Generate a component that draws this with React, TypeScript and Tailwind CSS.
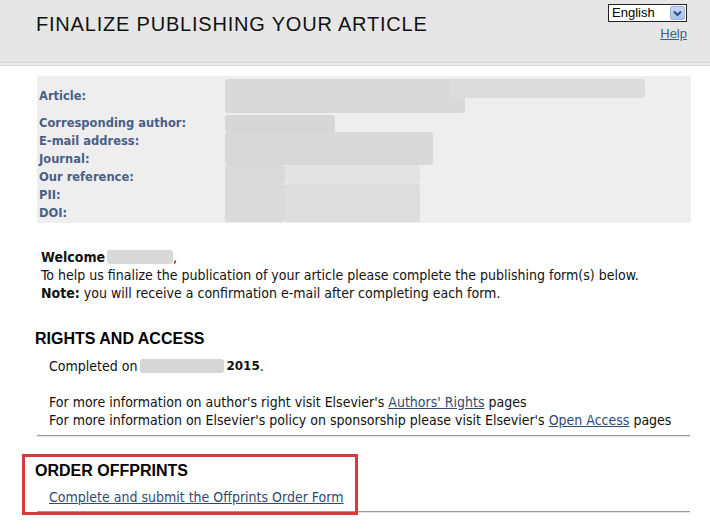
import React from "react";

const labels: { label: string; tall?: boolean }[] = [
  { label: "Article:", tall: true },
  { label: "Corresponding author:" },
  { label: "E-mail address:" },
  { label: "Journal:" },
  { label: "Our reference:" },
  { label: "PII:" },
  { label: "DOI:" },
];

const Blur = ({ className }: { className: string }) => (
  <div className={`rounded-[3px] ${className}`} />
);

export default function App() {
  return (
    <div className="relative w-[710px] h-[531px] overflow-hidden bg-white font-['DejaVu_Sans_Condensed',Tahoma,sans-serif] text-[14px] text-[#111]">
      {/* Header */}
      <div className="flex justify-between bg-[#e6e6e6] h-[62px] font-['Liberation_Sans',Arial,sans-serif]">
        <h1 className="pl-[36px] pt-[12px] text-[20px] tracking-[0.8px] text-[#111] leading-[24px]">
          FINALIZE PUBLISHING YOUR ARTICLE
        </h1>
        <div className="flex flex-col items-end pr-[23px] pt-[4px]">
          <div className="flex items-center w-[79px] h-[18px] border border-[#222] bg-white">
            <span className="flex-1 pl-[3px] text-[13px] leading-[16px] text-black">English</span>
            <span className="flex items-center justify-center w-[15px] h-[14px] mr-[1px] rounded-[2px] bg-gradient-to-b from-[#c9d8f5] to-[#a9c0ee] border border-[#9fb4dc]">
              <svg width="9" height="7" viewBox="0 0 9 7">
                <path d="M1 1.5 L4.5 5 L8 1.5" stroke="#2b4a8a" strokeWidth="2" fill="none" />
              </svg>
            </span>
          </div>
          <a className="mt-[4px] text-[13px] leading-[15px] text-[#3d5d8d] underline">Help</a>
        </div>
      </div>
      <div className="h-[1px] bg-[#d2d2d2]" />
      <div className="h-[2px] bg-[#ececec]" />
      <div className="h-[1px] bg-[#d6d6d6]" />

      {/* Info table */}
      <div className="ml-[37px] mr-[19px] mt-[10px] bg-[#eeeeee] pt-[3px] flex">
        <div className="w-[188px] pl-[2px] font-['DejaVu_Sans',Verdana,sans-serif] font-bold text-[11.5px] text-[#4a5f85]">
          {labels.map((l) => (
            <div
              key={l.label}
              className={`flex items-center ${l.tall ? "h-[36px]" : "h-[18px]"}`}
            >
              {l.label}
            </div>
          ))}
        </div>
        <div className="flex flex-col">
          <div className="flex h-[36px]">
            <Blur className="w-[240px] h-[34px] bg-[#d9d9d9]" />
            <Blur className="w-[195px] h-[19px] -ml-[15px] bg-[#dcdcdc]" />
          </div>
          <Blur className="w-[110px] h-[17px] bg-[#d6d6d6]" />
          <Blur className="w-[208px] h-[33px] bg-[#d8d8d8]" />
          <div className="flex">
            <Blur className="w-[60px] h-[57px] bg-[#dadada]" />
            <div className="flex flex-col">
              <Blur className="w-[135px] h-[19px] bg-[#e4e4e4]" />
              <Blur className="w-[135px] h-[38px] bg-[#dddddd]" />
            </div>
          </div>
        </div>
      </div>

      {/* Welcome */}
      <div className="ml-[41px] mt-[25px] leading-[18px]">
        <div className="flex items-center">
          <b>Welcome</b>
          <Blur className="ml-[2px] w-[66px] h-[14px] bg-[#d9d9d9]" />
          <span>,</span>
        </div>
        <p>
          To help us finalize the publication of your article please complete the publishing form(s) below.
        </p>
        <p>
          <b>Note:</b> you will receive a confirmation e-mail after completing each form.
        </p>
      </div>

      {/* Rights and access */}
      <div className="mt-[27px]">
        <h2 className="pl-[35px] font-['Liberation_Sans',Arial,sans-serif] font-bold text-[16px] leading-[20px] text-black">
          RIGHTS AND ACCESS
        </h2>
        <div className="pl-[49px] mt-[8px] leading-[18px]">
          <div className="flex items-center">
            <span>Completed on</span>
            <Blur className="ml-[3px] w-[84px] h-[14px] bg-[#d6d6d6]" />
            <b className="ml-[2px] font-['DejaVu_Sans',Verdana,sans-serif] text-[12px]">2015</b>
            <span>.</span>
          </div>
          <p className="mt-[18px]">
            For more information on author's right visit Elsevier's{" "}
            <a className="text-[#2f4b72] underline">Authors' Rights</a> pages
          </p>
          <p>
            For more information on Elsevier's policy on sponsorship please visit Elsevier's{" "}
            <a className="text-[#2f4b72] underline">Open Access</a> pages
          </p>
        </div>
        <div className="ml-[37px] mr-[20px] mt-[6px] h-[2px] bg-[#9a9a9a] border-b border-[#e5e5e5]" />
      </div>

      {/* Order offprints */}
      <div className="mt-[24px]">
        <h2 className="pl-[35px] font-['Liberation_Sans',Arial,sans-serif] font-bold text-[16px] leading-[20px] text-black">
          ORDER OFFPRINTS
        </h2>
        <div className="pl-[49px] mt-[7px] leading-[18px]">
          <a className="text-[#2f4b72] underline">Complete and submit the Offprints Order Form</a>
        </div>
        <div className="ml-[37px] mr-[20px] mt-[5px] h-[2px] bg-[#9a9a9a] border-b border-[#e5e5e5]" />
      </div>

      {/* annotation box */}
      <div className="absolute left-[22px] top-[454px] w-[336px] h-[61px] border-[3px] border-[#d63a3a]" />
    </div>
  );
}
